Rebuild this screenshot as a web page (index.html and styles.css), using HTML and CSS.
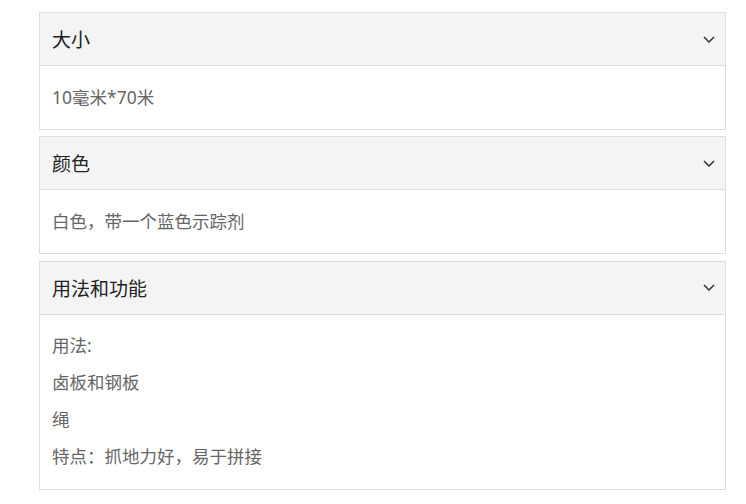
FILE: index.html
```html
<!DOCTYPE html>
<html lang="zh-CN">

<head>
  <meta charset="UTF-8">
  <meta name="viewport" content="width=device-width, initial-scale=1.0">
  <title>产品参数</title>
  <link rel="stylesheet" href="styles.css">
</head>

<body>
  <div class="specs">
    <div class="panel">
      <div class="panel-head">
        <span class="panel-title">大小</span>
        <svg class="chevron" width="12" height="7" viewBox="0 0 12 7"><polyline points="1,1 6,6 11,1" /></svg>
      </div>
      <div class="panel-body">
        <p>10毫米*70米</p>
      </div>
    </div>
    <div class="panel">
      <div class="panel-head">
        <span class="panel-title">颜色</span>
        <svg class="chevron" width="12" height="7" viewBox="0 0 12 7"><polyline points="1,1 6,6 11,1" /></svg>
      </div>
      <div class="panel-body">
        <p>白色，带一个蓝色示踪剂</p>
      </div>
    </div>
    <div class="panel">
      <div class="panel-head">
        <span class="panel-title">用法和功能</span>
        <svg class="chevron" width="12" height="7" viewBox="0 0 12 7"><polyline points="1,1 6,6 11,1" /></svg>
      </div>
      <div class="panel-body">
        <p>用法:</p>
        <p>卤板和钢板</p>
        <p>绳</p>
        <p>特点：抓地力好，易于拼接</p>
      </div>
    </div>
  </div>
</body>

</html>
```

FILE: styles.css
```css
body {
  margin: 0;
  background: #fff;
  font-family: "Noto Sans", "Noto Sans CJK SC", sans-serif;
}

.specs {
  width: 687px;
  padding: 12px 0 0 39px;
}

.panel {
  border: 1px solid #dddddd;
  margin-bottom: 6.3px;
}

.panel-head {
  height: 52px;
  display: flex;
  align-items: center;
  justify-content: space-between;
  padding: 0 10px 0 12px;
  background: #f4f4f4;
  border-bottom: 1px solid #dddddd;
}

.panel-title {
  font-size: 19px;
  color: #222;
}

.chevron {
  fill: none;
  stroke: #333;
  stroke-width: 1.5;
}

.panel-body {
  padding: 16.5px 12px 18.5px;
  font-size: 17.5px;
  color: #666;
}

.panel-body p {
  margin: 0;
  line-height: 28px;
}

.panel-body p + p {
  margin-top: 9px;
}
```
